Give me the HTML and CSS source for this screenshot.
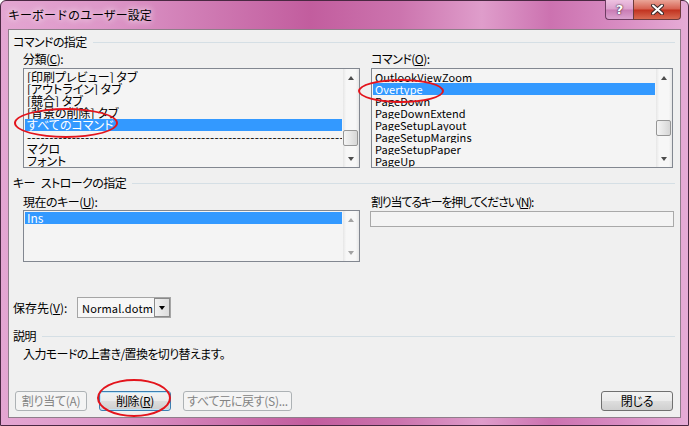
FILE: index.html
```html
<!doctype html>
<html>
	<head>
		<meta charset="utf-8"/>
		<title>キーボードのユーザー設定</title>
		<link rel="stylesheet" href="styles.css">
	</head>
	<body>
		<div class="window">
			<div class="titlebar">
				<div class="title">キーボードのユーザー設定</div>
				<div class="cap-help">?</div>
				<div class="cap-close">
					<svg width="13" height="11" viewBox="0 0 13 11">
						<path d="M2 1.5 L11 9.5 M11 1.5 L2 9.5" stroke="#3a2a2a" stroke-width="4" stroke-linecap="round"/>
						<path d="M2 1.5 L11 9.5 M11 1.5 L2 9.5" stroke="#fff" stroke-width="2" stroke-linecap="round"/>
					</svg>
				</div>
			</div>
			<div class="client">
				<!-- コマンドの指定 -->
				<div class="group-head"><span>コマンドの指定</span></div>
				<div class="cols">
					<div class="col-left">
						<div class="field-label">分類(<u>C</u>):</div>
						<div class="listbox list-big">
							<div class="list-items">
								<div class="item">[印刷プレビュー] タブ</div>
								<div class="item">[アウトライン] タブ</div>
								<div class="item">[競合] タブ</div>
								<div class="item">[背景の削除] タブ</div>
								<div class="item sel">すべてのコマンド</div>
								<div class="item dash">------------------------------------------------------------------------------------------------</div>
								<div class="item">マクロ</div>
								<div class="item">フォント</div>
							</div>
							<div class="scrollbar">
								<div class="sb-btn"><i class="arrow-up"></i></div>
								<div class="sb-track"><div class="sb-thumb thumb-cat"></div></div>
								<div class="sb-btn"><i class="arrow-down"></i></div>
							</div>
						</div>
					</div>
					<div class="col-right">
						<div class="field-label">コマンド(<u>O</u>):</div>
						<div class="listbox list-big">
							<div class="list-items latin">
								<div class="item">OutlookViewZoom</div>
								<div class="item sel">Overtype</div>
								<div class="item">PageDown</div>
								<div class="item">PageDownExtend</div>
								<div class="item">PageSetupLayout</div>
								<div class="item">PageSetupMargins</div>
								<div class="item">PageSetupPaper</div>
								<div class="item">PageUp</div>
							</div>
							<div class="scrollbar">
								<div class="sb-btn"><i class="arrow-up"></i></div>
								<div class="sb-track"><div class="sb-thumb thumb-cmd"></div></div>
								<div class="sb-btn"><i class="arrow-down"></i></div>
							</div>
						</div>
					</div>
				</div>

				<!-- キー ストロークの指定 -->
				<div class="group-head head-key"><span>キー ストロークの指定</span></div>
				<div class="cols">
					<div class="col-left">
						<div class="field-label label-key">現在のキー(<u>U</u>):</div>
						<div class="listbox list-key">
							<div class="list-items">
								<div class="item sel">Ins</div>
							</div>
							<div class="scrollbar">
								<div class="sb-btn"><i class="arrow-up off"></i></div>
								<div class="sb-track"></div>
								<div class="sb-btn"><i class="arrow-down off"></i></div>
							</div>
						</div>
					</div>
					<div class="col-right">
						<div class="field-label label-key label-press">割り当てるキーを押してください(<u>N</u>):</div>
						<div class="keyinput"></div>
					</div>
				</div>

				<div class="save-row">
					<div class="save-label">保存先(<u>V</u>):</div>
					<div class="dropdown">
						<div class="dd-text">Normal.dotm</div>
						<div class="dd-btn"><i class="arrow-down dark"></i></div>
					</div>
				</div>

				<!-- 説明 -->
				<div class="group-head head-desc"><span>説明</span></div>
				<div class="desc">入力モードの上書き/置換を切り替えます。</div>

				<div class="buttons">
					<div class="btn off btn-assign">割り当て(A)</div>
					<div class="btn focus btn-del">削除(<u>R</u>)</div>
					<div class="btn off btn-reset">すべて元に戻す(S)...</div>
					<div class="btn btn-close">閉じる</div>
				</div>
			</div>
		</div>

		<!-- 赤丸 -->
		<div class="mark mark1"></div>
		<div class="mark mark2"></div>
		<div class="mark mark3"></div>
	</body>
</html>
```

FILE: styles.css
```css
html,body{margin:0;padding:0;}
body{width:689px;height:426px;overflow:hidden;position:relative;font-family:"Noto Sans CJK JP",sans-serif;font-size:12px;color:#000;font-feature-settings:"palt";}
u{text-decoration:underline;text-underline-offset:1px;}

/* 枠 */
.window{box-sizing:border-box;width:689px;height:426px;border:1px solid #4a2842;border-radius:6px 6px 0 0;padding:0 7px 7px 7px;display:flex;flex-direction:column;
	background:linear-gradient(90deg,#e4a6d2 0%,#dd97c8 15%,#cf7ab3 30%,#c25d9e 45%,#cc74ae 58%,#df9dcb 70%,#cc72b0 80%,#d88cc2 90%,#e6acd6 100%);}
.titlebar{height:28px;display:flex;align-items:flex-start;}
.title{flex:1;line-height:28px;font-size:12px;font-feature-settings:normal;text-shadow:0 0 6px rgba(255,255,255,.9),0 0 10px rgba(255,255,255,.6);}
.cap-help{box-sizing:border-box;width:28px;height:20px;margin-top:-1px;border:1px solid #6e3c62;border-top:none;border-right:none;border-radius:0 0 0 4px;
	background:linear-gradient(#edc2e1,#dca0cd 48%,#c97bb4 52%,#dba2cf);color:#fff;font-family:"DejaVu Sans",sans-serif;font-weight:bold;font-size:13px;line-height:19px;text-align:center;text-shadow:0 0 2px #3a2034,0 0 1px #3a2034;}
.cap-close{box-sizing:border-box;width:48px;height:20px;margin-top:-1px;border:1px solid #6e3c3c;border-top:none;border-radius:0 0 4px 0;display:flex;align-items:center;justify-content:center;
	background:linear-gradient(#eaa598,#d6604f 48%,#c1321f 52%,#d86a52);}

.client{flex:1;box-sizing:border-box;border:1px solid #8f7d8a;background:#f0f0f0;padding:5px 7px 0 4px;}

/* グループ見出し */
.group-head{height:14px;display:flex;align-items:center;line-height:14px;letter-spacing:-0.6px;word-spacing:4px;}
.group-head::after{content:"";flex:1;height:1px;background:#d5dfe5;margin-left:6px;margin-right:-2px;}
.head-key{margin-top:8px;}
.head-desc{margin-top:11px;}

.cols{display:flex;padding-left:10px;gap:11px;}
.col-left{width:337px;}
.col-right{flex:1;}
.field-label{box-sizing:border-box;height:19px;padding-top:3px;line-height:14px;letter-spacing:-0.5px;}
.label-key{height:20px;padding-top:5px;}
.label-press{letter-spacing:-1.2px;}

/* リスト */
.listbox{box-sizing:border-box;border:1px solid #828790;background:#f4f4f4;display:flex;}
.list-big{height:100px;}
.list-key{height:52px;}
.list-items{flex:1;padding:2px 1px 0 1px;overflow:hidden;}
.list-key .list-items{padding-top:1px;}
.item{height:12px;line-height:12px;padding-left:2px;white-space:nowrap;overflow:hidden;}
.latin .item{font-size:11px;letter-spacing:0.1px;}
.item.sel{background:#3399ff;color:#fff;}
.item.dash{letter-spacing:0.3px;padding-right:9px;}

.scrollbar{width:16px;display:flex;flex-direction:column;background:linear-gradient(90deg,#e6e6e6,#f7f7f7 20%,#f7f7f7 80%,#e6e6e6);}
.sb-btn{height:17px;display:flex;align-items:center;justify-content:center;}
.sb-track{flex:1;}
.sb-thumb{box-sizing:border-box;width:15px;height:16px;border:1px solid #969696;border-radius:2px;background:linear-gradient(90deg,#f4f4f4,#e6e6e6 50%,#d6d6d6);}
.thumb-cat{margin-top:44px;}
.thumb-cmd{margin-top:34px;}
.arrow-up,.arrow-down{display:block;width:0;height:0;border-left:3.5px solid transparent;border-right:3.5px solid transparent;}
.arrow-up{border-bottom:4px solid #4d4d4d;}
.arrow-down{border-top:4px solid #4d4d4d;}
.arrow-up.off{border-bottom-color:#a3a3a3;}
.arrow-down.off{border-top-color:#a3a3a3;}
.arrow-down.dark{border-top-color:#000;}

.keyinput{box-sizing:border-box;height:16px;margin-top:1px;border:1px solid #a9a9a9;background:#f4f4f4;margin-left:-1px;margin-right:-1px;}

/* 保存先 */
.save-row{display:flex;align-items:center;margin-top:35px;height:21px;}
.save-label{width:64px;line-height:14px;}
.dropdown{box-sizing:border-box;width:94px;height:21px;border:1px solid #a5a5a5;background:#f7f7f7;display:flex;align-items:center;}
.dd-text{flex:1;padding-left:4px;line-height:14px;font-size:11px;letter-spacing:0.2px;white-space:nowrap;}
.dd-btn{box-sizing:border-box;width:16px;height:19px;border:1px solid #8a8a8a;background:linear-gradient(90deg,#f2f2f2,#dcdcdc);display:flex;align-items:center;justify-content:center;}

.desc{padding-left:10px;padding-top:4px;line-height:14px;letter-spacing:-0.6px;}

/* ボタン */
.buttons{display:flex;align-items:center;margin-top:30px;padding-left:2px;gap:12px;}
.btn{box-sizing:border-box;height:20px;width:72px;border:1px solid #707070;border-radius:3px;display:flex;align-items:center;justify-content:center;line-height:14px;letter-spacing:-0.3px;
	background:linear-gradient(#f2f2f2 0,#ebebeb 48%,#dddddd 52%,#cfcfcf 100%);}
.btn.off{border-color:#adb2b5;background:#f4f4f4;color:#838383;}
.btn.focus{border-color:#3c7fb1;box-shadow:inset 0 0 0 1px #bfe3f7;}
.btn-reset{width:109px;}
.btn-close{margin-left:auto;margin-top:-1px;}

/* 赤丸 */
.mark{position:absolute;box-sizing:border-box;border:2px solid #e3141c;border-radius:50%;}
.mark1{left:14px;top:108px;width:104px;height:30px;}
.mark2{left:358px;top:79px;width:86px;height:24px;}
.mark3{left:97px;top:379px;width:74px;height:38px;}
```
